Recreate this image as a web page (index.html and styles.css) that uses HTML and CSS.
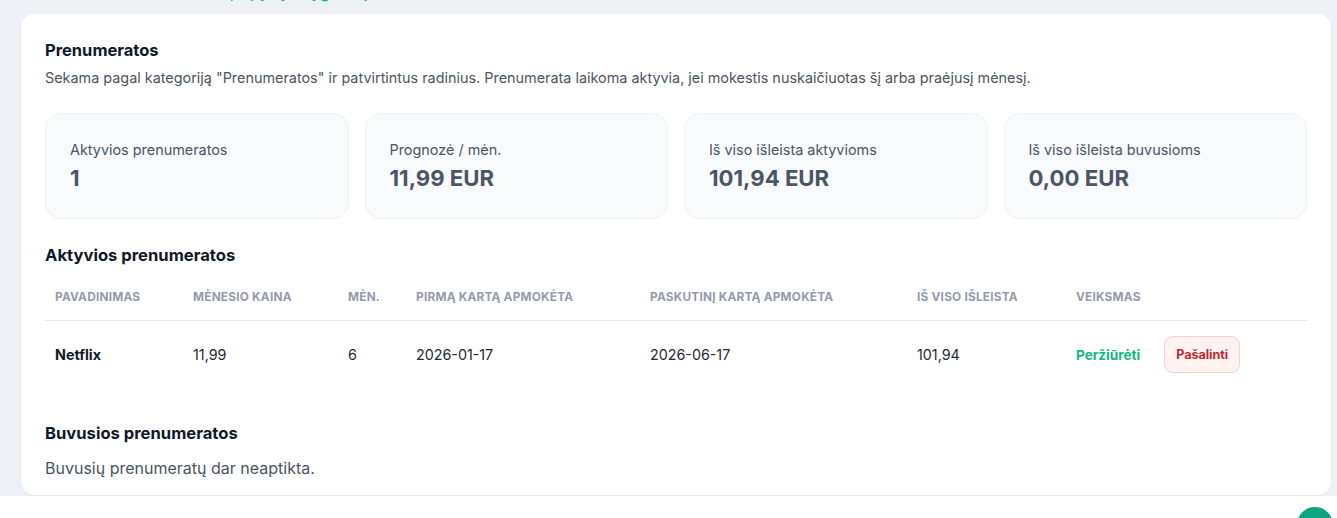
FILE: index.html
```html
<!DOCTYPE html>
<html lang="lt">
<head>
<meta charset="utf-8">
<title>Prenumeratos</title>
<link rel="stylesheet" href="styles.css">
</head>
<body>
<div class="page">
  <div class="topline"><span>Patvirtinti radiniai rodomi čia, o jų sąrašą galite peržiūrėti</span></div>
  <section class="card">
    <h2 class="title">Prenumeratos</h2>
    <p class="subtitle">Sekama pagal kategoriją "Prenumeratos" ir patvirtintus radinius. Prenumerata laikoma aktyvia, jei mokestis nuskaičiuotas šį arba praėjusį mėnesį.</p>
    <div class="stats">
      <div class="stat"><div class="stat-label">Aktyvios prenumeratos</div><div class="stat-value">1</div></div>
      <div class="stat"><div class="stat-label">Prognozė / mėn.</div><div class="stat-value">11,99 EUR</div></div>
      <div class="stat"><div class="stat-label">Iš viso išleista aktyvioms</div><div class="stat-value">101,94 EUR</div></div>
      <div class="stat"><div class="stat-label">Iš viso išleista buvusioms</div><div class="stat-value">0,00 EUR</div></div>
    </div>
    <h3 class="section-title">Aktyvios prenumeratos</h3>
    <table class="subs">
      <colgroup>
        <col class="c1"><col class="c2"><col class="c3"><col class="c4"><col class="c5"><col class="c6"><col class="c7">
      </colgroup>
      <thead>
        <tr>
          <th>Pavadinimas</th><th>Mėnesio kaina</th><th>Mėn.</th><th>Pirmą kartą apmokėta</th><th>Paskutinį kartą apmokėta</th><th>Iš viso išleista</th><th>Veiksmas</th>
        </tr>
      </thead>
      <tbody>
        <tr>
          <td class="name">Netflix</td><td>11,99</td><td>6</td><td>2026-01-17</td><td>2026-06-17</td><td>101,94</td>
          <td><div class="actions"><a class="view">Peržiūrėti</a><button class="remove">Pašalinti</button></div></td>
        </tr>
      </tbody>
    </table>
    <h3 class="section-title past">Buvusios prenumeratos</h3>
    <p class="empty">Buvusių prenumeratų dar neaptikta.</p>
  </section>
</div>
<footer class="footer">
  <div class="fab"></div>
</footer>
</body>
</html>
```
FILE: styles.css
```css
* { box-sizing: border-box; }
html, body {
  margin: 0;
  height: 518px;
  overflow: hidden;
  background: #edf1f6;
  font-family: Inter, "Noto Sans", "Liberation Sans", sans-serif;
  color: #1f2937;
}
.page {
  padding: 0 6px 0 21px;
}
.topline {
  height: 14px;
  overflow: hidden;
  padding-left: 2px;
}
.topline span {
  display: block;
  margin-top: -17px;
  line-height: 20px;
  font-size: 15px;
  font-weight: 600;
  color: #10b981;
  white-space: nowrap;
}
.card {
  background: #ffffff;
  border-radius: 14px;
  padding: 26px 24px 18px 24px;
  height: 481px;
  box-shadow: 0 1px 2px rgba(15, 23, 42, 0.04);
}
.title {
  margin: 0;
  font-size: 16.5px;
  font-weight: 700;
  line-height: 20px;
  color: #111827;
}
.subtitle {
  margin: 8px 0 0 0;
  font-size: 14.4px;
  line-height: 20px;
  color: #4b5563;
}
.stats {
  display: grid;
  grid-template-columns: repeat(4, 1fr);
  gap: 16px;
  margin-top: 25px;
}
.stat {
  background: #f8fafc;
  border: 1px solid #eef1f5;
  border-radius: 16px;
  height: 106px;
  padding: 26px 24px 0 24px;
}
.stat-label {
  font-size: 14.4px;
  line-height: 20px;
  color: #4b5563;
}
.stat-value {
  margin-top: 4px;
  font-size: 22.2px;
  font-weight: 700;
  line-height: 28px;
  color: #4b5563;
}
.section-title {
  margin: 26px 0 0 0;
  font-size: 16.6px;
  font-weight: 700;
  line-height: 20px;
  color: #111827;
}
.subs {
  width: 100%;
  border-collapse: collapse;
  margin-top: 11px;
  table-layout: fixed;
}
.c1 { width: 138px; }
.c2 { width: 155px; }
.c3 { width: 68px; }
.c4 { width: 234px; }
.c5 { width: 267px; }
.c6 { width: 159px; }
.subs th {
  text-align: left;
  font-size: 11.8px;
  font-weight: 700;
  letter-spacing: 0.02em;
  text-transform: uppercase;
  color: #949ba8;
  padding: 11px 10px 13px 10px;
  line-height: 20px;
  border-bottom: 1px solid #e5e7eb;
  white-space: nowrap;
}
.subs td {
  font-size: 14.3px;
  line-height: 20px;
  color: #1f2937;
  padding: 15px 10px 16px 10px;
  vertical-align: middle;
}
.subs td.name {
  font-weight: 700;
  color: #111827;
}
.actions {
  display: flex;
  align-items: center;
  gap: 24px;
}
.view {
  color: #10b981;
  font-weight: 700;
  font-size: 13.6px;
}
.remove {
  font-family: inherit;
  font-size: 12.5px;
  font-weight: 700;
  color: #c0272d;
  background: #fef2f2;
  border: 1px solid #fbcfd0;
  border-radius: 9px;
  height: 37px;
  padding: 0 11px;
}
.section-title.past {
  margin-top: 34px;
}
.empty {
  margin: 15px 0 0 0;
  font-size: 16px;
  line-height: 20px;
  color: #4b5563;
}
.footer {
  position: relative;
  margin-top: 1px;
  height: 40px;
  background: #ffffff;
  overflow: hidden;
}
.fab {
  position: absolute;
  right: 4px;
  top: 11px;
  width: 36px;
  height: 36px;
  border-radius: 50%;
  background: #10a37f;
}
```
